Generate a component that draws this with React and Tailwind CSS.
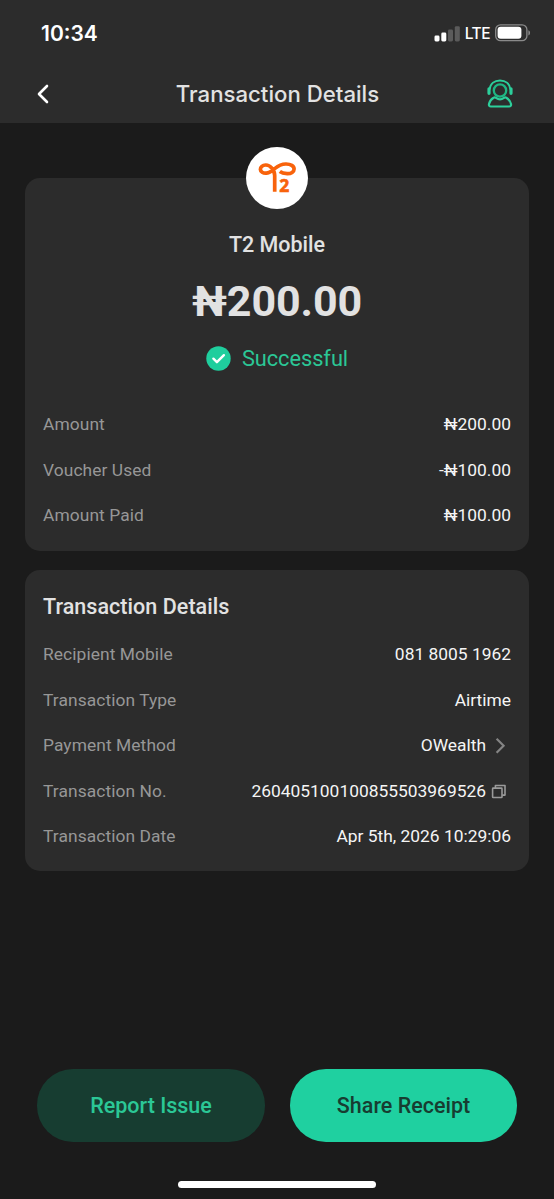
import React from 'react';

const summary = [
  { label: 'Amount', value: '₦200.00' },
  { label: 'Voucher Used', value: '-₦100.00' },
  { label: 'Amount Paid', value: '₦100.00' },
];

const details = [
  { label: 'Recipient Mobile', value: '081 8005 1962' },
  { label: 'Transaction Type', value: 'Airtime' },
  { label: 'Payment Method', value: 'OWealth', icon: 'chevron' },
  { label: 'Transaction No.', value: '260405100100855503969526', icon: 'copy' },
  { label: 'Transaction Date', value: 'Apr 5th, 2026 10:29:06' },
];

const ChevronIcon = () => (
  <svg width="25" height="20" viewBox="0 0 25 20" fill="none" stroke="#848484" strokeWidth="2.2">
    <path d="M10.6 3.8 17.6 10.8 10.6 17.8" />
  </svg>
);

const CopyIcon = () => (
  <svg width="25" height="20" viewBox="0 0 25 20" fill="none" stroke="#9a9a9a" strokeWidth="1.6" strokeLinejoin="round">
    <rect x="6.6" y="7.1" width="9.4" height="9.4" rx="0.6" />
    <path d="M9.4 7.1V4.5H19v9.6h-2.8" />
  </svg>
);

const SignalIcon = () => (
  <svg width="26" height="17" viewBox="0 0 26 17">
    <rect x="0.5" y="10.5" width="5" height="6" rx="1.4" fill="#fff" />
    <rect x="7.3" y="7.5" width="5" height="9" rx="1.4" fill="#fff" />
    <rect x="14" y="4.5" width="5" height="12" rx="1.4" fill="#5b5b5b" />
    <rect x="20.8" y="1.2" width="5" height="15.3" rx="1.4" fill="#5b5b5b" />
  </svg>
);

const BatteryIcon = () => (
  <svg width="36" height="18" viewBox="0 0 36 18">
    <rect x="0.7" y="0.9" width="31.2" height="15.8" rx="4.8" fill="none" stroke="#8a8a8a" strokeWidth="1.3" />
    <rect x="2.6" y="2.8" width="23.8" height="12" rx="3" fill="#fff" />
    <path d="M33.4 6.2c2.2.7 2.2 4.5 0 5.2z" fill="#8a8a8a" />
  </svg>
);

const SupportIcon = () => (
  <svg width="28" height="30" viewBox="0 0 28 30" fill="none" stroke="#2ccf9b" strokeWidth="2">
    <circle cx="14" cy="11.5" r="6.2" stroke="#1fb583" strokeWidth="2.3" />
    <path d="M3.6 10.5C4.2 4.6 8.6 1.5 14 1.5s9.8 3.1 10.4 9" />
    <path d="M3 9.8v4.5M25 9.8v4.5" strokeWidth="3.2" strokeLinecap="round" />
    <path
      d="M7.6 18.7c.8-.5 1.7-.3 2.4.2 2.4 1.7 5.6 1.7 8 0 .7-.5 1.6-.7 2.4-.2 2.2 1.3 4.1 3.8 4.6 6.3.3 1.5-.5 2.5-1.9 2.5H4.9c-1.4 0-2.2-1-1.9-2.5.5-2.5 2.4-5 4.6-6.3z"
      strokeWidth="2.2"
      strokeLinejoin="round"
    />
  </svg>
);

const BrandLogo = () => (
  <svg width="62" height="62" viewBox="0 0 62 62" fill="none" stroke="#f8630c" strokeWidth="3.7">
    <path d="M28.7 44.7V28.5c0-3-1.2-5.6-3-7.6-1.7-1.9-3.9-3-6.1-2.9-3 .1-5.3 2-5.2 4.3.1 2.5 2.7 4.1 5.8 3.9 3.3-.2 5.4-2.2 8.5-4.6 3.4-2.7 6.8-4.5 11.1-4.6 4.9-.1 8.3 2.1 8.3 5 0 2.8-2.9 4.8-6.9 4.7-3.2-.1-5.400-.6-7.400-2.200" />
    <text
      x="38.3"
      y="44.7"
      textAnchor="middle"
      fill="#f8630c"
      stroke="#f8630c"
      strokeWidth="0.6"
      className="font-['Noto_Sans',sans-serif] text-[17.5px] font-bold"
    >
      2
    </text>
  </svg>
);

const Row = ({ label, value, icon }) => (
  <div className="flex h-[45.5px] items-center justify-between text-[17.4px]">
    <span className="tracking-[0.07px] text-[#979797]">{label}</span>
    <span className="flex items-center text-[#f5f5f5]">
      {value}
      {icon === 'chevron' && <ChevronIcon />}
      {icon === 'copy' && <CopyIcon />}
    </span>
  </div>
);

const App = () => {
  return (
    <div className="flex h-[1199px] w-[554px] flex-col bg-[#1b1b1b] font-['Roboto',sans-serif] text-[#e2e2e2]">
      <header className="h-[123px] bg-[#2c2c2c] font-['Inter',sans-serif]">
        {/* Status bar */}
        <div className="flex h-[66px] items-center justify-between pr-[23px] pl-[41px] text-white">
          <span className="pt-px text-[21px] font-semibold">10:34</span>
          <div className="flex items-center">
            <SignalIcon />
            <span className="mr-[5px] ml-[5px] pt-px text-[15.5px] font-medium tracking-[-0.5px]">LTE</span>
            <BatteryIcon />
          </div>
        </div>

        <div className="grid h-[55px] grid-cols-[60px_1fr_60px] items-center px-[26px]">
          <button className="flex pl-[9px]">
            <svg width="16" height="22" viewBox="0 0 16 22" fill="none" stroke="#fff" strokeWidth="2.6" strokeLinecap="round" strokeLinejoin="round">
              <path d="M12 3 4 11l8 8" />
            </svg>
          </button>
          <h1 className="pl-px text-center text-[22.2px] leading-[32px] font-medium">Transaction Details</h1>
          <button className="flex justify-end pr-[14px]">
            <SupportIcon />
          </button>
        </div>
      </header>

      <main className="flex flex-1 flex-col px-[25px] pt-[55px]">
        <section className="flex h-[372.5px] flex-col rounded-[15px] bg-[#2c2c2c] px-[18px]">
          <div className="-mt-[31.5px] h-[62px] w-[62px] self-center rounded-full bg-white">
            <BrandLogo />
          </div>
          <div className="mt-[20px] text-center text-[21.5px] leading-[32px] font-medium">T2 Mobile</div>
          <div className="mt-[13.5px] text-center text-[43px] leading-[54px] font-bold tracking-[-0.1px]">₦200.00</div>
          <div className="mt-[14.5px] flex h-[32px] items-center justify-center gap-[11px] text-[21.8px] tracking-[-0.05px] text-[#2bc796]">
            <svg width="25" height="25" viewBox="0 0 25 25" fill="none">
              <circle cx="12.5" cy="12.5" r="12.2" fill="#1fce9d" />
              <path d="m7.4 12.7 3.5 3.5 7-7" stroke="#fff" strokeWidth="2.4" strokeLinecap="round" strokeLinejoin="round" />
            </svg>
            <span className="pt-px">Successful</span>
          </div>
          <div className="mt-[27px]">
            {summary.map((item) => (
              <Row key={item.label} {...item} />
            ))}
          </div>
        </section>

        <section className="mt-[19px] h-[301.5px] rounded-[15px] bg-[#2c2c2c] px-[18px] pt-[21px]">
          <h2 className="text-[21.5px] leading-[32px] font-medium tracking-[0.05px]">Transaction Details</h2>
          <div className="mt-[9px]">
            {details.map((item) => (
              <Row key={item.label} {...item} />
            ))}
          </div>
        </section>
      </main>

      <footer className="flex h-[130px] flex-col items-center">
        <div className="flex gap-[25px] text-[21.5px] font-medium">
          <button className="h-[73px] w-[228px] rounded-[36px] bg-[#173d31] pt-[2px] text-[#2bc796]">Report Issue</button>
          <button className="h-[73px] w-[227px] rounded-[36px] bg-[#1fd0a0] pt-[2px] text-[#173d31]">Share Receipt</button>
        </div>
        {/* Home indicator */}
        <div className="mt-[39px] h-[7px] w-[198px] rounded-full bg-white" />
      </footer>
    </div>
  );
};

export default App;
